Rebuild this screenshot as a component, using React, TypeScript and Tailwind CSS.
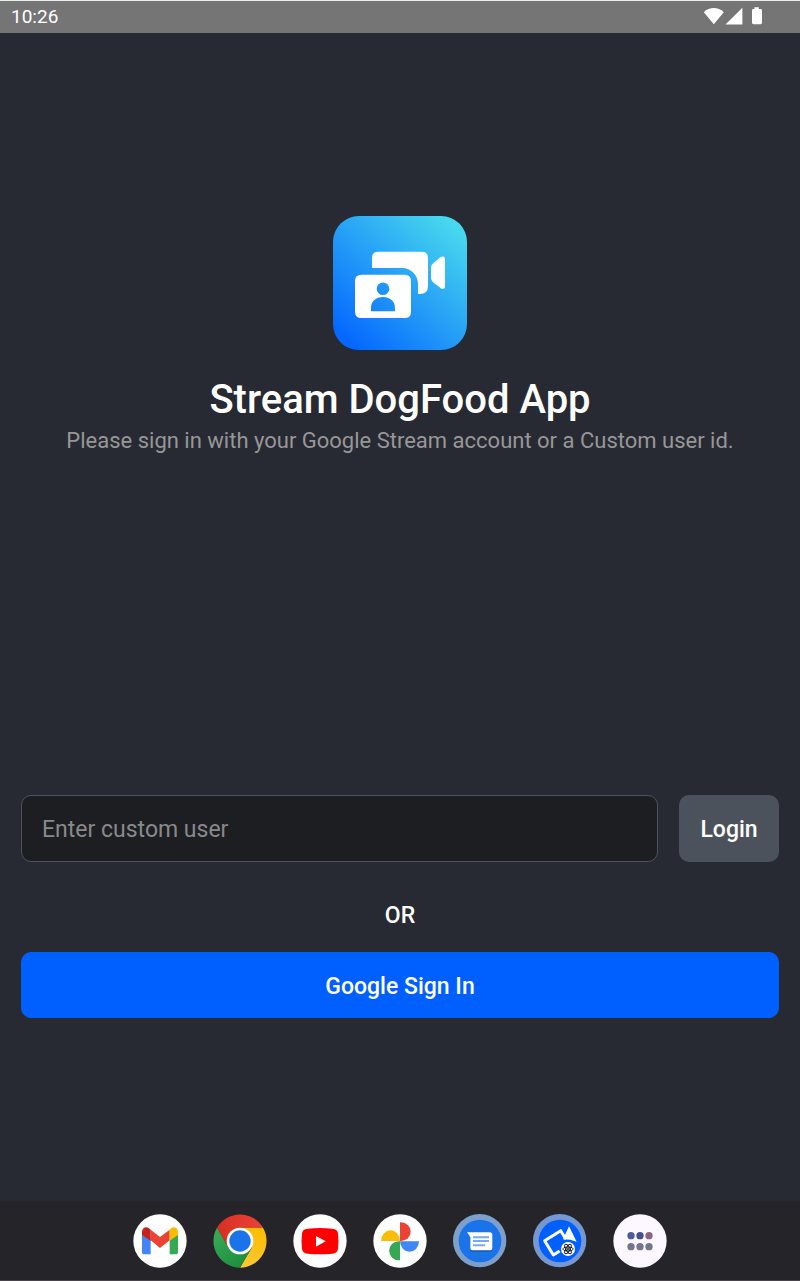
import type { ReactNode } from "react";

function StatusBar() {
  return (
    <header className="flex h-[33px] shrink-0 items-center justify-between border-t border-[#e8efec] bg-[#757575] pr-[37px] pl-[11px]">
      <time className="text-[19px] leading-6">10:26</time>
      <div className="flex items-center pb-0.5" role="img" aria-label="Wi-Fi, signal and battery status">
        <svg className="h-[18px] w-[60px]" viewBox="0 0 60 18" fill="white">
          <path d="M0.8 5.2C6.4-.4 15-.4 20.8 5.2L10.8 17.2Z" />
          <path d="M22.5 17.4L39.4 .8V17.4Z" />
          <path d="M51.4 .2H55.8V2H57.6Q59 2 59 3.4V15.8Q59 17.2 57.6 17.2H50.4Q49 17.2 49 15.8V3.4Q49 2 50.4 2H51.4Z" />
        </svg>
      </div>
    </header>
  );
}

function StreamLogo() {
  return (
    <svg className="size-[134px]" viewBox="0 0 134 134" role="img" aria-label="Stream logo">
      <defs>
        <linearGradient id="logo" x1="15" y1="125" x2="119" y2="9" gradientUnits="userSpaceOnUse">
          <stop stopColor="#0568ff" />
          <stop offset="1" stopColor="#47d7ee" />
        </linearGradient>
      </defs>
      <rect width="134" height="134" rx="26" fill="url(#logo)" />
      <g fill="white">
        <path d="M39 52V42Q39 35.7 45.3 35.7H88.7Q95 35.7 95 42V70Q95 78 87 78H85V68C85 59 78 52 69 52Z" />
        <path d="M98 51.5Q98 49 100 47.5L106 42.3Q108 40.6 109.5 40.6Q112 40.6 112 43V70Q112 73 109.5 73Q108 73 106 70.8L100 66.2Q98 64.6 98 62Z" />
        <path
          fillRule="evenodd"
          d="M28.5 58.7H71.5Q78 58.7 78 65V95.7Q78 102 71.5 102H28.5Q22 102 22 95.7V65Q22 58.7 28.5 58.7ZM50 66.5a6.3 6.3 0 1 0 0 12.6a6.3 6.3 0 1 0 0-12.6ZM38 95.3H62V92C62 85 57 81 50 81S38 85 38 92Z"
        />
      </g>
    </svg>
  );
}

function AppIcon({ label, children }: { label: string; children: ReactNode }) {
  return (
    <button type="button" aria-label={label} className="size-[54px] rounded-full">
      <svg className="size-full" viewBox="-1 -1 162 162">
        {children}
      </svg>
    </button>
  );
}

function Dock() {
  return (
    <nav className="flex h-20 shrink-0 items-center justify-center gap-[26px] border-b border-[#4a434c] bg-[#252429]">
      <AppIcon label="Gmail">
        <circle cx="80" cy="80" r="80" fill="white" />
        <path d="M26 55L52 75V120H34Q26 120 26 112Z" fill="#4285f4" />
        <path d="M134 55L109 75V120H126Q134 120 134 112Z" fill="#34a853" />
        <path d="M52 46L80 68L109 46V78L80 101L52 78Z" fill="#ea4335" />
        <path d="M26 62V53C26 40 38 35 47 42L52 46V79Z" fill="#c5221f" />
        <path d="M134 62V53C134 40 122 35 113 42L109 46V79Z" fill="#fbbc04" />
      </AppIcon>
      <AppIcon label="Chrome">
        <defs>
          <linearGradient id="chromeGreen" x1="20" y1="60" x2="90" y2="150" gradientUnits="userSpaceOnUse">
            <stop stopColor="#34a853" />
            <stop offset="1" stopColor="#1e8e3e" />
          </linearGradient>
          <linearGradient id="chromeYellow" x1="130" y1="45" x2="90" y2="155" gradientUnits="userSpaceOnUse">
            <stop stopColor="#fbbc04" />
            <stop offset="1" stopColor="#fcc934" />
          </linearGradient>
          <linearGradient id="chromeRed" x1="20" y1="30" x2="145" y2="30" gradientUnits="userSpaceOnUse">
            <stop stopColor="#d93025" />
            <stop offset="1" stopColor="#ea4335" />
          </linearGradient>
        </defs>
        <path d="M11 40A80 80 0 0 1 149 40H80L45 100Z" fill="url(#chromeRed)" />
        <path d="M149 40A80 80 0 0 1 80 160L115 100L80 40Z" fill="url(#chromeYellow)" />
        <path d="M80 160A80 80 0 0 1 11 40L45 100L80 120L115 100Z" fill="url(#chromeGreen)" />
        <circle cx="80" cy="80" r="40" fill="white" />
        <circle cx="80" cy="80" r="32" fill="#1a73e8" />
      </AppIcon>
      <AppIcon label="YouTube">
        <circle cx="80" cy="80" r="80" fill="white" />
        <path d="M43 43Q80 39 117 43Q132 44 134 57Q137 80 134 103Q132 117 117 118Q80 121 43 118Q28 117 26 103Q23 80 26 57Q28 44 43 43Z" fill="#ff0000" />
        <path d="M68 65L97 81L68 97Z" fill="white" />
      </AppIcon>
      <AppIcon label="Photos">
        <circle cx="80" cy="80" r="80" fill="white" />
        <path d="M80 24H83A29 28 0 0 1 83 80H80Z" fill="#ea4335" />
        <path d="M80 81H137A28.5 31 0 0 1 80 81Z" fill="#4285f4" />
        <path d="M80 138H76A28 28 0 0 1 76 81H80Z" fill="#34a853" />
        <path d="M23 80A28.5 32 0 0 1 80 80Z" fill="#fbbc04" />
      </AppIcon>
      <AppIcon label="Messages">
        <circle cx="79" cy="79" r="80" fill="#7c9fcb" />
        <circle cx="80" cy="80" r="64" fill="#1a73e8" />
        <path d="M43 60L50 66V104Q50 112 59 112H109Q117 112 117 104V64H60Z" fill="#1259b8" />
        <path d="M41 54H109Q117 54 117 62V100Q117 108 109 108H59Q51 108 51 100V68Z" fill="white" />
        <path d="M59 69H107M59 80H107M59 93H95" stroke="#75a9f2" strokeWidth="6" />
      </AppIcon>
      <AppIcon label="Stream Video">
        <circle cx="79" cy="79" r="80" fill="#7597d2" />
        <circle cx="80" cy="80" r="64" fill="#005fff" />
        <path d="M79 110L60 122L34 79L82 49L98 75" fill="none" stroke="white" strokeWidth="9" strokeLinejoin="round" />
        <path d="M89 75L107 36L130 82L111 76Z" fill="white" />
        <circle cx="104" cy="104" r="21" fill="white" />
        <g fill="none" stroke="#20232a" strokeWidth="3">
          <ellipse cx="104" cy="104" rx="16" ry="6" />
          <ellipse cx="104" cy="104" rx="16" ry="6" transform="rotate(60 104 104)" />
          <ellipse cx="104" cy="104" rx="16" ry="6" transform="rotate(120 104 104)" />
        </g>
        <circle cx="104" cy="104" r="3" fill="#20232a" />
      </AppIcon>
      <AppIcon label="All apps">
        <circle cx="80" cy="80" r="80" fill="#fdf8ff" />
        <circle cx="53" cy="64" r="11" fill="#4f5b98" />
        <circle cx="80" cy="64" r="11" fill="#444f8b" />
        <circle cx="107" cy="64" r="11" fill="#8b6580" />
        <g fill="#73768c">
          <circle cx="53" cy="97" r="11" />
          <circle cx="80" cy="97" r="11" />
          <circle cx="107" cy="97" r="11" />
        </g>
      </AppIcon>
    </nav>
  );
}

export default function App() {
  return (
    <div className="flex min-h-screen flex-col bg-[#272a32] font-[Roboto,sans-serif] text-white">
      <StatusBar />
      <main className="flex grow flex-col justify-between px-[21px] pt-[183px] pb-[183px]">
        <section className="flex flex-col items-center text-center">
          <StreamLogo />
          <h1 className="mt-[26px] text-[40px] leading-[48px] font-medium">Stream DogFood App</h1>
          <p className="text-[22px] leading-[34px] text-[#979797]">
            Please sign in with your Google Stream account or a Custom user id.
          </p>
        </section>
        <form className="flex flex-col" onSubmit={(event) => event.preventDefault()}>
          <div className="flex gap-[21px]">
            <input
              type="text"
              aria-label="Custom user"
              placeholder="Enter custom user"
              className="h-[67px] min-w-0 grow rounded-[10px] border border-[#4c525c] bg-[#1c1e22] px-5 pt-0.5 text-[23px] placeholder:text-[#898989]"
            />
            <button type="submit" className="h-[67px] w-[100px] rounded-[10px] bg-[#4c525c] pt-1 text-[23px] font-medium">
              Login
            </button>
          </div>
          <p className="mt-[39px] mb-[21px] text-center text-[23px] leading-[30px] font-medium">OR</p>
          <button type="button" className="h-[66px] rounded-[10px] bg-[#005fff] pt-1 text-[23px] font-medium">
            Google Sign In
          </button>
        </form>
      </main>
      <Dock />
    </div>
  );
}
